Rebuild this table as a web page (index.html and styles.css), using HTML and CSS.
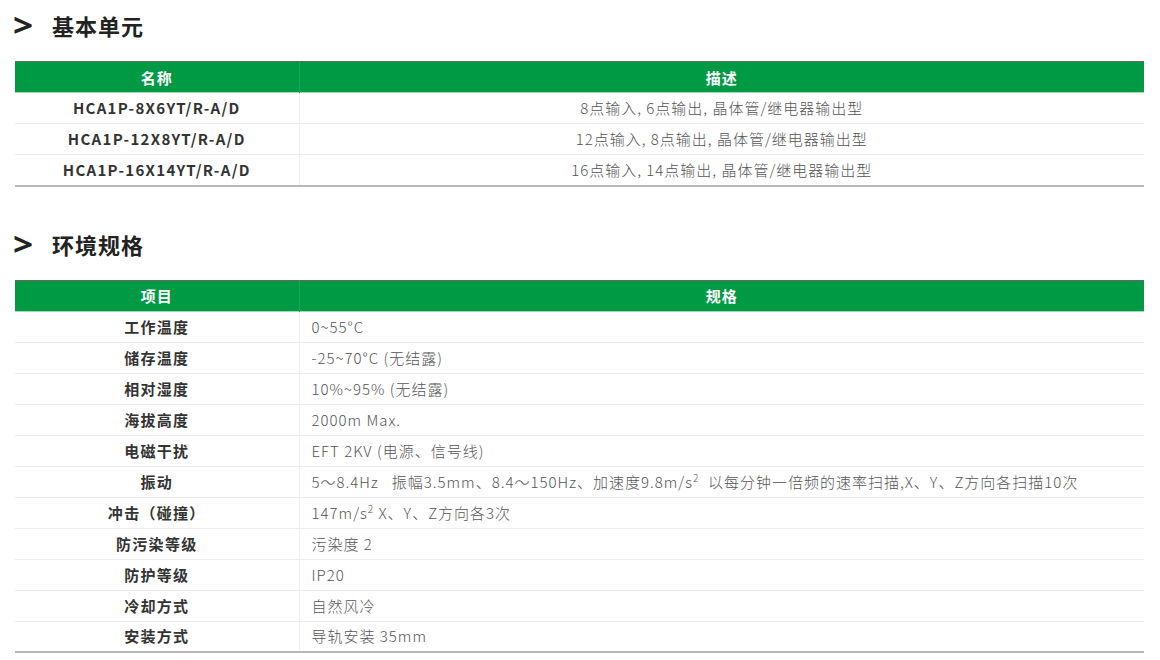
FILE: index.html
```html
<!DOCTYPE html>
<html lang="zh-CN">
<head>
<meta charset="utf-8">
<link rel="stylesheet" href="styles.css">
</head>
<body>
<section class="sec">
  <h2 class="title"><span class="arrow">&gt;</span><span>基本单元</span></h2>
  <table class="spec center">
    <colgroup><col class="c1"><col></colgroup>
    <thead><tr><th>名称</th><th>描述</th></tr></thead>
    <tbody>
      <tr><td>HCA1P-8X6YT/R-A/D</td><td>8点输入, 6点输出, 晶体管/继电器输出型</td></tr>
      <tr><td>HCA1P-12X8YT/R-A/D</td><td>12点输入, 8点输出, 晶体管/继电器输出型</td></tr>
      <tr><td>HCA1P-16X14YT/R-A/D</td><td>16点输入, 14点输出, 晶体管/继电器输出型</td></tr>
    </tbody>
  </table>
</section>
<section class="sec sec2">
  <h2 class="title"><span class="arrow">&gt;</span><span>环境规格</span></h2>
  <table class="spec left">
    <colgroup><col class="c1"><col></colgroup>
    <thead><tr><th>项目</th><th>规格</th></tr></thead>
    <tbody>
      <tr><td>工作温度</td><td>0~55°C</td></tr>
      <tr><td>储存温度</td><td>-25~70°C (无结露)</td></tr>
      <tr><td>相对湿度</td><td>10%~95% (无结露)</td></tr>
      <tr><td>海拔高度</td><td>2000m Max.</td></tr>
      <tr><td>电磁干扰</td><td>EFT 2KV (电源、信号线)</td></tr>
      <tr><td>振动</td><td>5～8.4Hz&nbsp;&nbsp;&nbsp;振幅3.5mm、8.4～150Hz、加速度9.8m/s<sup>2</sup>&nbsp;&nbsp;以每分钟一倍频的速率扫描,X、Y、Z方向各扫描10次</td></tr>
      <tr><td>冲击（碰撞）</td><td>147m/s<sup>2</sup> X、Y、Z方向各3次</td></tr>
      <tr><td>防污染等级</td><td>污染度 2</td></tr>
      <tr><td>防护等级</td><td>IP20</td></tr>
      <tr><td>冷却方式</td><td>自然风冷</td></tr>
      <tr><td>安装方式</td><td>导轨安装 35mm</td></tr>
    </tbody>
  </table>
</section>
</body>
</html>
```

FILE: styles.css
```css
html, body {
  margin: 0;
  padding: 0;
  background: #fff;
}
body {
  padding: 0 16px 0 15px;
  font-family: "Noto Sans CJK SC", "Noto Sans", sans-serif;
  color: #333;
}
.sec {
  padding-top: 8px;
}
.sec2 {
  padding-top: 40px;
}
.title {
  margin: 0 0 19px -2px;
  height: 34px;
  display: flex;
  align-items: center;
  font-size: 22px;
  font-weight: 700;
  letter-spacing: 1px;
  color: #222;
}
.arrow {
  width: 39px;
  font-size: 32px;
  font-weight: 700;
  line-height: 34px;
  font-family: "Noto Sans", sans-serif;
  transform: scaleX(1.1);
  transform-origin: left center;
}
.spec {
  width: 1129px;
  border-collapse: collapse;
  table-layout: fixed;
  font-size: 15px;
}
.c1 {
  width: 284px;
}
.spec thead tr {
  height: 31px;
  background: #019a44;
  border-top: 1px solid #666;
  border-bottom: 1px solid #9fdcb6;
}
.spec th {
  color: #fff;
  font-weight: 700;
  padding: 0;
  text-align: center;
  letter-spacing: 1px;
}
.spec th + th {
  border-left: 1px solid #17a453;
}
.spec tbody tr {
  height: 31px;
  border-bottom: 1px solid #ececec;
}
.spec tbody tr:last-child {
  border-bottom: 2px solid #b8b8b8;
}
.spec td {
  padding: 0;
  line-height: 20px;
}
.spec td:first-child {
  text-align: center;
  font-weight: 700;
  color: #333;
  letter-spacing: 1.3px;
}
.spec td + td {
  border-left: 1px solid #f0f0f0;
  color: #555;
  font-weight: 300;
  letter-spacing: 1px;
}
.spec.center td + td {
  text-align: center;
}
.spec.left td + td {
  text-align: left;
  padding-left: 12px;
}
sup {
  font-size: 10px;
  line-height: 0;
  vertical-align: 6px;
}
```
